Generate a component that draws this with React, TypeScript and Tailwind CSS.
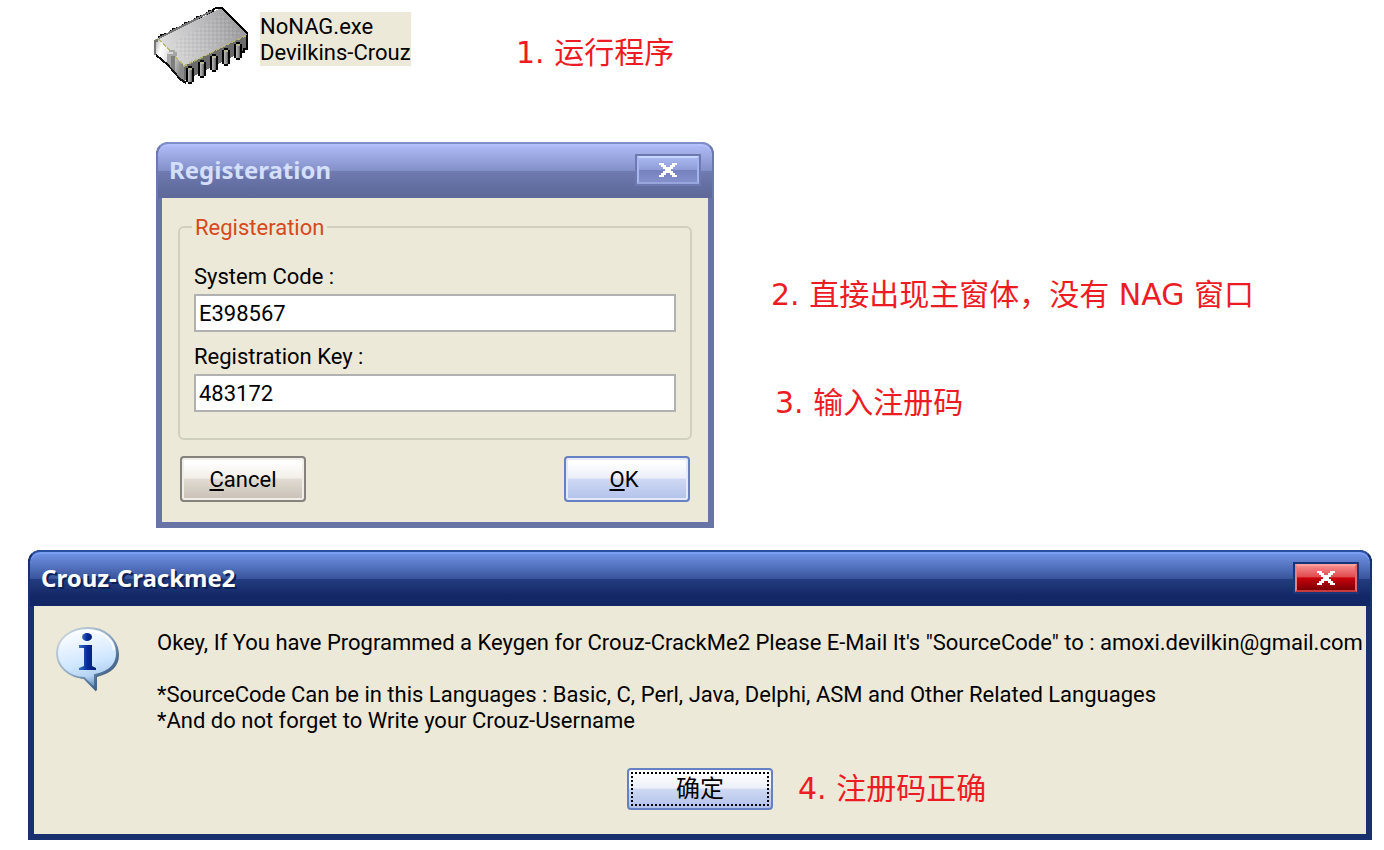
import type { ReactNode } from "react";

const UI_FONT = "font-['Roboto','Noto_Sans_CJK_SC',sans-serif]";
const TITLE_FONT = "font-['Noto_Sans','Noto_Sans_CJK_SC',sans-serif]";
const NOTE_FONT = "font-['DejaVu_Sans','Noto_Sans_CJK_SC',sans-serif]";

const LEGS: [number, number, number][] = [
  [88, 38, 56],
  [76, 44, 62],
  [64, 50, 68],
  [52, 56, 74],
  [40, 62, 80],
];

const BACK_LEGS: [number, number][] = [
  [8, 28],
  [20, 22],
  [32, 16],
  [44, 10],
  [56, 4],
];

function ChipIcon() {
  return (
    <svg viewBox="0 0 104 86" className="h-[86px] w-[104px] shrink-0" aria-hidden="true" shapeRendering="crispEdges">
      <defs>
        <linearGradient id="chipTop" x1="0" y1="0.5" x2="1" y2="0.3">
          <stop offset="0" stopColor="#dcdcdc" />
          <stop offset="0.5" stopColor="#bdbdbf" />
          <stop offset="1" stopColor="#98989c" />
        </linearGradient>
        <linearGradient id="chipEnd" x1="0" y1="0" x2="1" y2="0.4">
          <stop offset="0" stopColor="#a8a8a8" />
          <stop offset="0.25" stopColor="#ffffff" />
          <stop offset="0.7" stopColor="#d4d4d4" />
          <stop offset="1" stopColor="#8a8a8a" />
        </linearGradient>
        <linearGradient id="chipLeg" x1="0" y1="0" x2="1" y2="0">
          <stop offset="0" stopColor="#b8b8b8" />
          <stop offset="0.5" stopColor="#989898" />
          <stop offset="1" stopColor="#5c5c5c" />
        </linearGradient>
        <pattern id="chipGrain" width="4" height="4" patternUnits="userSpaceOnUse">
          <rect x="0" y="0" width="2" height="2" fill="#fff" opacity="0.12" />
          <rect x="2" y="2" width="2" height="2" fill="#000" opacity="0.04" />
        </pattern>
      </defs>
      {BACK_LEGS.map(([x, y]) => (
        <path key={x} d={`M${x} ${y + 8}V${y + 4}H${x + 2}V${y + 2}H${x + 6}V${y + 1}H${x + 8}V${y + 6}Z`} fill="#0a0a0a" />
      ))}
      <path d="M34 62L97 31V44L92 48L34 77Z" fill="#6b6b6b" />
      <path d="M97 30V45H94V48H91" fill="none" stroke="#000" strokeWidth="2" />
      <path d="M5 39V35L9 34L34 62V78H32L30 74H28V72L24 68L20 62H17L5 50Z" fill="url(#chipEnd)" />
      <path d="M5 51V37H7V35" fill="none" stroke="#777" strokeWidth="2" />
      <path d="M6 51L18 61L30 75L36 79" stroke="#111" strokeWidth="2" fill="none" />
      <path d="M9 35L71 4L97 31L34 62Z" fill="url(#chipTop)" />
      <path d="M22 40L72 10L90 30L36 56Z" fill="url(#chipGrain)" />
      <path d="M62 6L66 4H70L72 4L98 30" fill="none" stroke="#000" strokeWidth="2" />
      <path d="M9 34L62 7" stroke="#777" strokeWidth="2" />
      <path d="M9 35L34 62L97 31" fill="none" stroke="#b5b56e" strokeWidth="1.5" strokeDasharray="4 2" />
      <path d="M17 48H19V46H25V48H27V52H25V68L20 62L17 58Z" fill="#a6a6a6" />
      <path d="M21 52H25V68L21 63Z" fill="#7e7e7e" />
      <path d="M17 49H23" fill="none" stroke="#dadada" strokeWidth="2" />
      {LEGS.map(([x, top, bottom]) => (
        <g key={x}>
          <path
            d={`M${x - 4} ${top + 2}H${x - 2}V${top}H${x + 2}V${top + 2}H${x + 4}V${bottom - 2}H${x + 2}V${bottom}H${x - 2}V${bottom - 2}H${x - 4}Z`}
            fill="#000"
          />
          <path d={`M${x - 2} ${top + 2}H${x + 2}V${bottom - 2}H${x - 2}Z`} fill="url(#chipLeg)" />
          <path d={`M${x - 2} ${top + 2}H${x + 2}V${top + 4}H${x - 2}Z`} fill="#b8b894" />
        </g>
      ))}
    </svg>
  );
}

function InfoIcon() {
  return (
    <svg viewBox="0 0 68 68" className="h-[68px] w-[68px] shrink-0" aria-hidden="true">
      <defs>
        <linearGradient id="bubble" x1="0.3" y1="0" x2="0.55" y2="1">
          <stop offset="0" stopColor="#ffffff" />
          <stop offset="0.35" stopColor="#e3f0ff" />
          <stop offset="0.6" stopColor="#cde6ff" />
          <stop offset="0.8" stopColor="#b4d2f2" />
          <stop offset="1" stopColor="#5688b4" />
        </linearGradient>
        <linearGradient id="bubbleEdge" x1="0" y1="0" x2="1" y2="1">
          <stop offset="0" stopColor="#d5dde4" />
          <stop offset="0.5" stopColor="#8fa8be" />
          <stop offset="1" stopColor="#123a6e" />
        </linearGradient>
        <linearGradient id="glyph" x1="0" y1="0" x2="1" y2="0">
          <stop offset="0" stopColor="#3a70c8" />
          <stop offset="0.5" stopColor="#062a9c" />
          <stop offset="1" stopColor="#021c6b" />
        </linearGradient>
      </defs>
      <path d="M36 5C53 5 65 15 65 30C65 41 58 48 43 52V66L32 54C17 53 6 43 6 30C6 15 18 5 36 5Z" fill="#163d70" opacity="0.75" />
      <path d="M34 3C51 3 63 14 63 28C63 39 56 47 41 50V64L30 53C15 52 3 42 3 28C3 14 16 3 34 3Z" fill="url(#bubble)" stroke="url(#bubbleEdge)" strokeWidth="2" />
      <path d="M34 6C48 6 58 13 60 25" fill="none" stroke="#fff" strokeWidth="2" opacity="0.8" />
      <ellipse cx="33" cy="12" rx="5" ry="4" fill="url(#glyph)" />
      <path d="M25 20H38V41L42 43V45H25V43L30 41V23H25Z" fill="url(#glyph)" />
    </svg>
  );
}

function CloseGlyph() {
  return (
    <svg viewBox="0 0 18 14" className="h-[14px] w-[18px]" aria-hidden="true" shapeRendering="crispEdges">
      <path
        d="M0 0h5v2h2v2h4v-2h2v-2h5v2h-2v2h-2v2h-2v2h2v2h2v2h2v2h-5v-2h-2v-2h-4v2h-2v2h-5v-2h2v-2h2v-2h2v-2h-2v-2h-2v-2h-2z"
        fill="#fff"
      />
    </svg>
  );
}

function Note({ children }: { children: ReactNode }) {
  return <p className={`${NOTE_FONT} text-[30px] leading-9 whitespace-nowrap text-[#ed1c24]`}>{children}</p>;
}

function Field({ id, label, value }: { id: string; label: string; value: string }) {
  return (
    <div className="flex flex-col gap-1">
      <label htmlFor={id} className="leading-[26px]">
        {label}
      </label>
      <input
        id={id}
        type="text"
        defaultValue={value}
        className="h-[38px] w-full border-2 border-[#b1b1b1] bg-white px-[3px] outline-none"
      />
    </div>
  );
}

function RegistrationWindow() {
  return (
    <section
      aria-labelledby="registration-title"
      className="flex w-[558px] flex-col overflow-hidden rounded-t-[12px] bg-[#6774a5]"
    >
      <header className="flex h-14 items-center justify-between rounded-t-[12px] border-x-2 border-t-2 border-x-[#6b78b2] border-t-[#7f8dc8] bg-[linear-gradient(to_bottom,#b0bdf8_0%,#8490c8_49%,#707cb2_50%,#626da0_80%,#5f6999_100%)] pr-[13px] pb-[2px] pl-[11px] shadow-[inset_0_2px_0_#b3c0fb]">
        <h2 id="registration-title" className={`${TITLE_FONT} text-[24px] leading-8 font-bold text-[#d3dffb]`}>
          Registeration
        </h2>
        <button
          type="button"
          aria-label="Close"
          className="flex h-7 w-[62px] items-center justify-center border-2 border-t-[#c5d7ff] border-r-[#a3b3ee] border-b-[#98a5dc] border-l-[#a9b7ef] bg-[linear-gradient(to_bottom,#a9b8f0_0%,#8f9cd8_48%,#7581bd_50%,#8490cc_100%)] shadow-[0_0_0_2px_#6d79b0]"
        >
          <CloseGlyph />
        </button>
      </header>
      <form className="mx-[6px] mb-[6px] bg-[#ece9d8] px-4 pt-4 pb-5" onSubmit={(e) => e.preventDefault()}>
        <fieldset className="rounded-[6px] border-2 border-[#d0d0bf] px-[14px] pb-[26px]">
          <legend className="-ml-[2px] px-[3px] pt-[2px] leading-6 text-[#d5491b]">Registeration</legend>
          <div className="flex flex-col gap-3 pt-6">
            <Field id="system-code" label="System Code :" value="E398567" />
            <Field id="registration-key" label="Registration Key :" value="483172" />
          </div>
        </fieldset>
        <div className="mt-4 flex justify-between px-[2px]">
          <button
            type="button"
            className="h-[46px] w-[126px] rounded-[4px] border-2 border-[#85817c] bg-[linear-gradient(to_bottom,#fff_10%,#f3efe8_48%,#e0dbd3_50%,#c9c0b6_100%)] shadow-[inset_0_0_0_2px_#f1eeea]"
          >
            <span className="underline decoration-2 underline-offset-2">C</span>ancel
          </button>
          <button
            type="submit"
            className="h-[46px] w-[126px] rounded-[4px] border-2 border-[#6681c2] bg-[linear-gradient(to_bottom,#fff_10%,#eceffa_48%,#cfd9f3_50%,#b1c1ea_100%)] pr-[6px] shadow-[inset_0_0_0_2px_#e4eafa]"
          >
            <span className="underline decoration-2 underline-offset-2">O</span>K
          </button>
        </div>
      </form>
    </section>
  );
}

function MessageWindow() {
  return (
    <section
      aria-labelledby="message-title"
      className="flex flex-col overflow-hidden rounded-t-[12px] bg-[#19306f]"
    >
      <header className="flex h-14 items-center justify-between rounded-t-[12px] border-x-2 border-t-2 border-x-[#173072] border-t-[#2b4f9f] bg-[linear-gradient(to_bottom,#7396e8_0%,#3a559c_49%,#243d80_50%,#142868_80%,#112463_100%)] pr-[13px] pb-[2px] pl-[11px] shadow-[inset_0_2px_0_#7b9ef2]">
        <h2
          id="message-title"
          className={`${TITLE_FONT} text-[24px] leading-8 font-bold text-white [text-shadow:2px_2px_0_#0d1f55]`}
        >
          Crouz-Crackme2
        </h2>
        <button
          type="button"
          aria-label="Close"
          className="flex h-7 w-[62px] items-center justify-center border-2 border-t-[#ffa1a1] border-r-[#d96a6d] border-b-[#c83a3e] border-l-[#e88082] bg-[linear-gradient(to_bottom,#f58a8a_0%,#e14a4e_45%,#c8000c_50%,#7d0006_100%)] shadow-[0_0_0_2px_#1c3478]"
        >
          <CloseGlyph />
        </button>
      </header>
      <div className="mx-[6px] mb-[6px] bg-[#ece9d8] pt-[19px] pb-6">
        <div className="flex gap-[35px] pl-5">
          <InfoIcon />
          <div className="pt-[5px] leading-[26px] whitespace-nowrap">
            <p>
              Okey, If You have Programmed a Keygen for Crouz-CrackMe2 Please E-Mail It's "SourceCode" to :
              amoxi.devilkin@gmail.com
            </p>
            <p className="pt-[26px]">
              *SourceCode Can be in this Languages : Basic, C, Perl, Java, Delphi, ASM and Other Related Languages
            </p>
            <p>*And do not forget to Write your Crouz-Username</p>
          </div>
        </div>
        <div className="mt-[34px] grid grid-cols-[1fr_auto_1fr] items-center gap-x-[25px]">
          <button
            type="button"
            className="col-start-2 h-[42px] w-[146px] rounded-[4px] border-2 border-[#6681c2] bg-[linear-gradient(to_bottom,#fff_10%,#eceffa_48%,#cfd9f3_50%,#b1c1ea_100%)] p-[2px]"
          >
            <span className="flex h-full items-center justify-center border-2 border-dotted border-black text-[24px] leading-7">
              确定
            </span>
          </button>
          <Note>4. 注册码正确</Note>
        </div>
      </div>
    </section>
  );
}

export default function App() {
  return (
    <main className={`${UI_FONT} flex min-h-screen flex-col bg-white pb-[10px] text-[22px] text-black`}>
      <div className="flex h-[142px] items-start pt-1 pl-[150px]">
        <div className="flex w-[366px] shrink-0 items-start gap-[6px]">
          <ChipIcon />
          <p className="mt-2 bg-[#ece9d8] pt-[2px] leading-[26px] whitespace-nowrap">
            NoNAG.exe
            <br />
            Devilkins-Crouz
          </p>
        </div>
        <div className="pt-[31px]">
          <Note>1. 运行程序</Note>
        </div>
      </div>
      <div className="flex items-start gap-[57px] pl-[156px]">
        <RegistrationWindow />
        <div className="flex flex-col gap-[72px] pt-[135px]">
          <Note>2. 直接出现主窗体，没有 NAG 窗口</Note>
          <div className="pl-1">
            <Note>3. 输入注册码</Note>
          </div>
        </div>
      </div>
      <div className="mt-[22px] pr-3 pl-7">
        <MessageWindow />
      </div>
    </main>
  );
}
